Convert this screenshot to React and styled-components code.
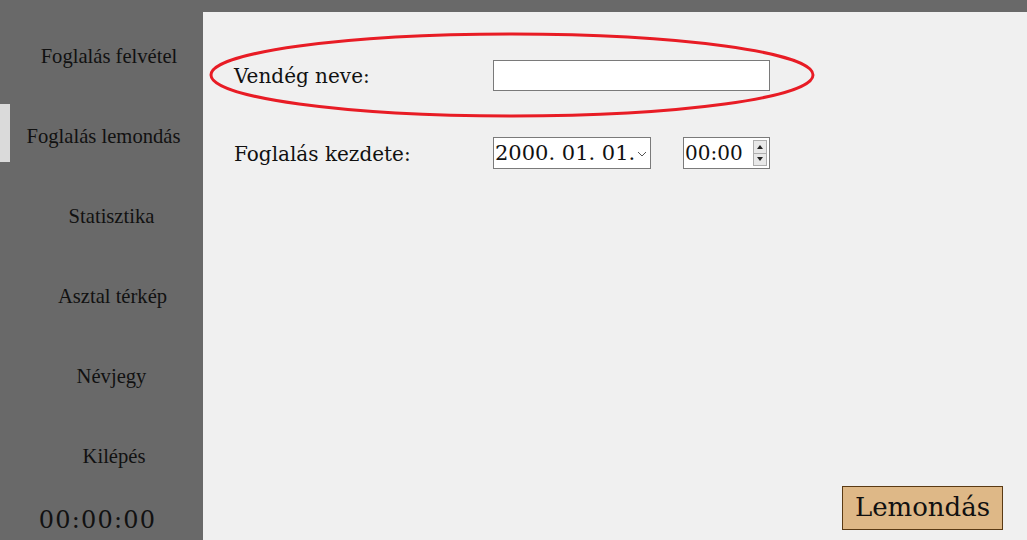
import React from "react";
import styled, { createGlobalStyle } from "styled-components";

const GlobalStyle = createGlobalStyle`
  html, body {
    margin: 0;
    padding: 0;
    overflow: hidden;
  }
`;

const menuItems = [
  { label: "Foglalás felvétel", shift: 5 },
  { label: "Foglalás lemondás", shift: -6, active: true },
  { label: "Statisztika", shift: 10 },
  { label: "Asztal térkép", shift: 12 },
  { label: "Névjegy", shift: 10 },
  { label: "Kilépés", shift: 15 },
];

function App() {
  return (
    <>
      <GlobalStyle />
      <Shell>
        <Sidebar>
          <Menu>
            {menuItems.map((item) => (
              <MenuItem key={item.label} $active={item.active} $shift={item.shift}>
                {item.label}
              </MenuItem>
            ))}
          </Menu>
          <Clock>00:00:00</Clock>
        </Sidebar>
        <Content>
          <Highlight viewBox="0 0 610 90" width="610" height="90">
            <ellipse cx="304" cy="43" rx="301" ry="41" fill="none" stroke="#e81c25" strokeWidth="3" />
          </Highlight>
          <Form>
            <Label>Vendég neve:</Label>
            <NameBox />
            <Label>Foglalás kezdete:</Label>
            <DateRow>
              <DateBox>
                2000. 01. 01.
                <Chevron viewBox="0 0 10 6" width="10" height="6">
                  <path d="M1 1 L5 5 L9 1" fill="none" stroke="#555" strokeWidth="1" />
                </Chevron>
              </DateBox>
              <TimeBox>
                00:00
                <Spinner>
                  <SpinBtn>
                    <svg viewBox="0 0 6 4" width="6" height="4"><path d="M0 4 L3 0 L6 4 Z" fill="#222" /></svg>
                  </SpinBtn>
                  <SpinBtn>
                    <svg viewBox="0 0 6 4" width="6" height="4"><path d="M0 0 L3 4 L6 0 Z" fill="#222" /></svg>
                  </SpinBtn>
                </Spinner>
              </TimeBox>
            </DateRow>
          </Form>
          <CancelButton>Lemondás</CancelButton>
        </Content>
      </Shell>
    </>
  );
}

export default App;

const Shell = styled.div`
  display: flex;
  height: 100vh;
  background: #696969;
  padding-top: 12px;
  box-sizing: border-box;
`;

const Sidebar = styled.div`
  width: 203px;
  margin-top: -12px;
  display: flex;
  flex-direction: column;
  padding: 24px 0 6px;
  box-sizing: border-box;
`;

const Menu = styled.div`
  display: flex;
  flex-direction: column;
  gap: 22px;
`;

const MenuItem = styled.div`
  height: 58px;
  display: flex;
  align-items: center;
  justify-content: center;
  padding-top: 6px;
  padding-left: ${(p) => Math.max(p.$shift, 0)}px;
  padding-right: ${(p) => Math.max(-p.$shift, 0)}px;
  box-sizing: border-box;
  font-family: "Liberation Serif", serif;
  font-size: 20.6px;
  color: #111;
  border-left: 10px solid ${(p) => (p.$active ? "#dadada" : "transparent")};
`;

const Clock = styled.div`
  margin-top: auto;
  text-align: center;
  font-family: "DejaVu Serif", serif;
  font-size: 24px;
  letter-spacing: 1.2px;
  color: #111;
  padding-right: 8px;
`;

const Content = styled.div`
  flex: 1;
  position: relative;
  background: #f0f0f0;
  display: flex;
  flex-direction: column;
  padding: 48px 24px 10px 31px;
`;

const Highlight = styled.svg`
  position: absolute;
  left: 5px;
  top: 20px;
  pointer-events: none;
`;

const Form = styled.div`
  display: grid;
  grid-template-columns: 259px auto;
  grid-template-rows: 31px 32px;
  row-gap: 46px;
  align-items: center;
  justify-content: start;
`;

const Label = styled.div`
  font-family: "DejaVu Serif", serif;
  font-size: 20px;
  color: #111;
  padding-top: 1px;
`;

const NameBox = styled.div`
  width: 277px;
  height: 31px;
  box-sizing: border-box;
  background: #fff;
  border: 1px solid #7a7a7a;
`;

const DateRow = styled.div`
  display: flex;
  gap: 32px;
  height: 32px;
`;

const FieldBox = styled.div`
  height: 32px;
  box-sizing: border-box;
  background: #fff;
  border: 1px solid #7a7a7a;
  display: flex;
  align-items: center;
  font-family: "DejaVu Serif", serif;
  font-size: 20px;
  color: #111;
  white-space: nowrap;
`;

const DateBox = styled(FieldBox)`
  width: 158px;
  padding-left: 1px;
  font-size: 21px;
`;

const Chevron = styled.svg`
  margin-left: 2px;
  margin-top: 2px;
`;

const TimeBox = styled(FieldBox)`
  width: 87px;
  padding-left: 1px;
  justify-content: space-between;
  padding-right: 2px;
`;

const Spinner = styled.div`
  display: flex;
  flex-direction: column;
  width: 14px;
  height: 26px;
  border: 1px solid #adadad;
  box-sizing: border-box;
`;

const SpinBtn = styled.div`
  flex: 1;
  display: flex;
  align-items: center;
  justify-content: center;
  background: #e8e8e8;
  & + & {
    border-top: 1px solid #adadad;
  }
`;

const CancelButton = styled.button`
  margin-top: auto;
  align-self: flex-end;
  width: 161px;
  height: 44px;
  background: #deb887;
  border: 1px solid #5a3a14;
  font-family: "DejaVu Serif", serif;
  font-size: 26px;
  color: #111;
  padding: 0 0 2px;
`;
